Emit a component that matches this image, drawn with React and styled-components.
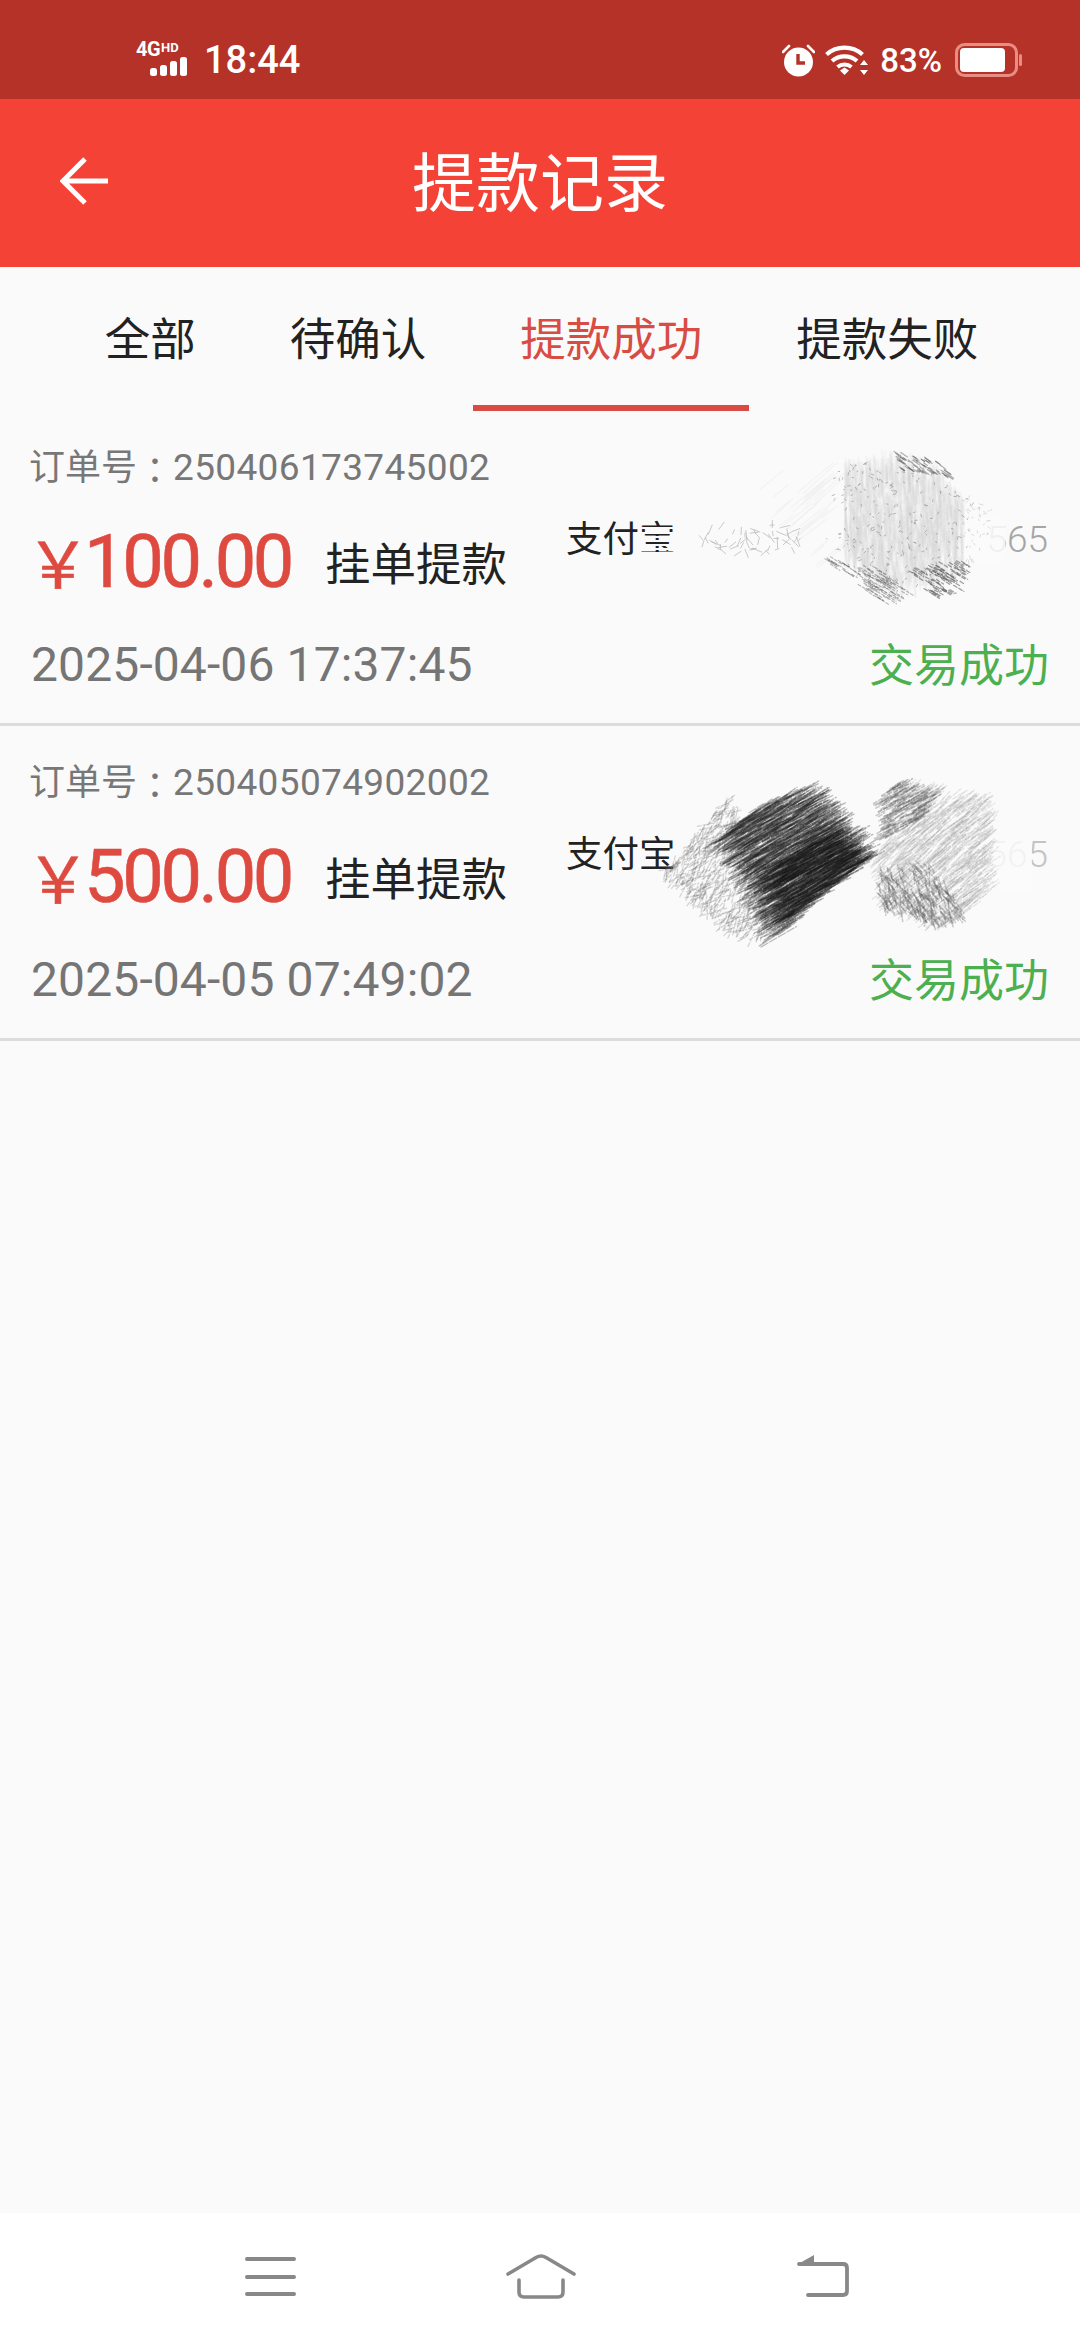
import React from "react";
import styled, { createGlobalStyle } from "styled-components";

const Global = createGlobalStyle`
  html, body { margin: 0; padding: 0; background: #fafafa; }
  * { box-sizing: border-box; }
`;

const FONT = `Roboto, "Noto Sans CJK SC", sans-serif`;

const Page = styled.div`
  width: 1080px;
  height: 2340px;
  display: flex;
  flex-direction: column;
  background: #fafafa;
  font-family: ${FONT};
  overflow: hidden;
`;

const StatusBar = styled.div`
  height: 99px;
  flex: none;
  background: #b53228;
  color: #fff;
  display: flex;
  align-items: center;
  padding: 21px 58px 0 136px;
`;

const Network = styled.div`
  width: 53px;
  height: 34px;
  display: flex;
  flex-direction: column;
  margin-top: -2px;
`;

const NetworkLabel = styled.div`
  height: 15px;
  display: flex;
  align-items: flex-start;
  font-weight: 700;
  font-size: 20px;
  line-height: 15px;
  letter-spacing: -0.5px;
`;

const NetworkHd = styled.span`
  font-size: 13px;
  line-height: 11px;
  margin-left: 1px;
  letter-spacing: 0;
`;

const Clock = styled.div`
  margin-left: 15px;
  font-size: 38px;
  font-weight: 500;
  line-height: 40px;
`;

const StatusRight = styled.div`
  margin-left: auto;
  display: flex;
  align-items: center;
`;

const Percent = styled.div`
  margin: 2px 13px 0 12px;
  font-size: 33px;
  font-weight: 500;
  line-height: 40px;
`;

const WifiIcon = styled.svg`
  margin-left: 10px;
`;

const Header = styled.header`
  height: 168px;
  flex: none;
  background: #f44336;
  display: grid;
  grid-template-columns: 1fr auto 1fr;
  align-items: center;
`;

const BackButton = styled.div`
  padding: 0 0 4px 60px;
  display: flex;
`;

const Title = styled.h1`
  margin: 4px 0 0;
  color: #fff;
  font-size: 64px;
  font-weight: 400;
  line-height: 80px;
`;

const Tabs = styled.nav`
  height: 144px;
  flex: none;
  display: flex;
  justify-content: center;
  padding-left: 3px;
`;

const Tab = styled.div`
  height: 144px;
  padding: 0 47px;
  display: flex;
  align-items: center;
  font-size: 45.5px;
  color: ${(p) => (p.$active ? "#d84c44" : "#222")};
  border-bottom: 6px solid ${(p) => (p.$active ? "#d84c44" : "transparent")};
`;

const Record = styled.article`
  position: relative;
  height: 315px;
  flex: none;
  padding: 30px 32px 22px 30px;
  border-bottom: 3px solid #dcdcdc;
  display: grid;
  grid-template-columns: 295px 241px 1fr;
  grid-template-rows: 54px 132px 74px;
`;

const OrderNo = styled.div`
  grid-column: 1 / -1;
  display: flex;
  align-items: center;
  margin-left: -1px;
  color: #777;
  font-size: 36px;
  line-height: 54px;
`;

const OrderColon = styled.span`
  font-family: "Noto Sans CJK TC", sans-serif;
`;

const OrderDigits = styled.span`
  font-size: 37px;
  letter-spacing: 0.35px;
`;

const Amount = styled.div`
  display: flex;
  align-items: center;
  padding-left: 6px;
  color: #de4a40;
  font-size: 74px;
  letter-spacing: -3.4px;
  -webkit-text-stroke: 0.6px #de4a40;
`;

const Yen = styled.span`
  font-family: "Noto Sans CJK SC", sans-serif;
  font-size: 64px;
  letter-spacing: 0;
  margin: -2px -6px 0 -10px;
`;

const Kind = styled.div`
  display: flex;
  align-items: center;
  color: #222;
  font-size: 45.5px;
`;

const Account = styled.div`
  display: flex;
  align-items: flex-start;
  justify-content: space-between;
  padding-top: 20px;
  color: #222;
  font-size: 36.5px;
  line-height: 50px;
`;

const AccountTail = styled.span`
  color: ${(p) => p.$tone};
  font-weight: 300;
  font-size: 37px;
`;

const DateText = styled.div`
  grid-column: 1 / 3;
  display: flex;
  align-items: center;
  padding-left: 1px;
  color: #757575;
  font-size: 48px;
  letter-spacing: 0.12px;
`;

const StatusText = styled.div`
  display: flex;
  align-items: center;
  justify-content: flex-end;
  color: #4caf50;
  font-size: 45px;
  padding-bottom: 3px;
  margin-right: -1px;
`;

const Scribble = styled.svg`
  position: absolute;
  left: 640px;
  top: ${(p) => p.$top}px;
  pointer-events: none;
`;

const List = styled.main`
  flex: 1;
  display: flex;
  flex-direction: column;
`;

const BottomNav = styled.footer`
  height: 127px;
  flex: none;
  background: #fff;
  display: flex;
  align-items: flex-start;
  padding: 41px 0 0 245px;
`;

const NavIcon = styled.svg`
  margin-left: ${(p) => p.$gap || 0}px;
  margin-top: ${(p) => p.$drop || 0}px;
`;

// Seeded generator so the pencil shading is the same on every render.
function rng(seed) {
  let a = seed;
  return () => {
    a = (a + 0x6d2b79f5) | 0;
    let t = Math.imul(a ^ (a >>> 15), 1 | a);
    t = (t + Math.imul(t ^ (t >>> 7), 61 | t)) ^ t;
    return ((t ^ (t >>> 14)) >>> 0) / 4294967296;
  };
}

function inside(poly, x, y) {
  let hit = false;
  for (let i = 0, j = poly.length - 1; i < poly.length; j = i++) {
    const [xi, yi] = poly[i];
    const [xj, yj] = poly[j];
    if (yi > y !== yj > y && x < ((xj - xi) * (y - yi)) / (yj - yi) + xi) hit = !hit;
  }
  return hit;
}

// Scatters short pencil strokes inside a polygon and groups them into batches,
// so that strokes from different batches build up where they cross.
function hatch(poly, { count, angle, jitter = 6, length, seed, batches = 24 }) {
  const r = rng(seed);
  const xs = poly.map((p) => p[0]);
  const ys = poly.map((p) => p[1]);
  const [x0, x1, y0, y1] = [Math.min(...xs), Math.max(...xs), Math.min(...ys), Math.max(...ys)];
  const out = Array.from({ length: batches }, () => "");
  let made = 0;
  let guard = 0;
  while (made < count && guard < count * 30) {
    guard += 1;
    const x = x0 + r() * (x1 - x0);
    const y = y0 + r() * (y1 - y0);
    if (!inside(poly, x, y)) continue;
    const a = ((angle + (r() - 0.5) * jitter) * Math.PI) / 180;
    const l = length * (0.4 + r() * 0.8);
    const bx = x - (Math.cos(a) * l) / 2;
    const by = y - (Math.sin(a) * l) / 2;
    out[made % batches] += `M${bx.toFixed(1)} ${by.toFixed(1)}L${(bx + Math.cos(a) * l).toFixed(1)} ${(by + Math.sin(a) * l).toFixed(1)}`;
    made += 1;
  }
  return out;
}

const Layer = ({ poly, color, opacity, width, dash, ...rest }) => (
  <g fill="none" stroke={color} strokeOpacity={opacity} strokeWidth={width} strokeDasharray={dash} strokeLinecap="round">
    {hatch(poly, rest).map((d, i) => (
      <path key={i} d={d} />
    ))}
  </g>
);

const PaleShading = () => (
  <Scribble $top={29} width="420" height="180" viewBox="0 0 420 180">
    {/* broken strokes across the payment label */}
    {[88, 93, 97, 101, 105, 109, 113].map((y) => (
      <line key={y} x1="0" x2="36" y1={y} y2={y} stroke="#fafafa" strokeWidth="2" />
    ))}
    <Layer poly={[[60, 84], [160, 84], [160, 114], [60, 114]]} count={60} angle={0} jitter={180} length={9} seed={3} color="#b4b4b4" opacity={0.7} width={1} />
    <rect x="318" y="78" width="47" height="44" fill="#fafafa" opacity="0.88" />
    <Layer poly={[[205, 30], [255, 20], [300, 35], [325, 70], [322, 130], [250, 150], [205, 115]]} count={1500} angle={88} jitter={10} length={24} seed={7} color="#d0d0d0" opacity={0.12} width={2.2} />
    <Layer poly={[[195, 28], [270, 15], [335, 65], [325, 135], [250, 160], [185, 110]]} count={240} angle={0} jitter={180} length={2.4} seed={11} color="#7c7c7c" opacity={0.5} width={1} />
    <Layer poly={[[320, 50], [352, 68], [350, 110], [322, 130]]} count={50} angle={0} jitter={180} length={2.4} seed={29} color="#bbb" opacity={0.5} width={1} />
    <Layer poly={[[255, 12], [300, 22], [312, 38], [262, 30]]} count={70} angle={35} length={7} seed={13} color="#555" opacity={0.45} width={1.2} batches={6} />
    <Layer poly={[[178, 116], [240, 130], [270, 152], [248, 166]]} count={90} angle={32} length={13} seed={17} color="#555" opacity={0.42} width={1.1} dash="3 2" batches={6} />
    <Layer poly={[[270, 128], [328, 122], [322, 150], [290, 158]]} count={80} angle={32} length={11} seed={19} color="#444" opacity={0.5} width={1.2} dash="4 2" batches={6} />
    <Layer poly={[[130, 40], [200, 30], [200, 120], [150, 100]]} count={30} angle={-40} length={40} seed={23} color="#ececec" opacity={0.4} width={1.5} />
  </Scribble>
);

const DarkShading = () => (
  <Scribble $top={44} width="420" height="180" viewBox="0 0 420 180">
    <rect x="345" y="70" width="47" height="50" fill="#fafafa" opacity="0.85" />
    <Layer poly={[[22, 105], [90, 25], [135, 165], [100, 172], [55, 135]]} count={520} angle={-48} jitter={80} length={15} seed={31} color="#6c6c6c" opacity={0.26} width={1.3} dash="4 2" />
    <Layer poly={[[82, 68], [120, 35], [168, 18], [232, 88], [170, 135], [138, 168], [118, 125]]} count={1500} angle={-30} jitter={12} length={36} seed={37} color="#262626" opacity={0.3} width={1.35} dash="8 2" />
    <Layer poly={[[120, 100], [200, 60], [225, 90], [145, 150]]} count={400} angle={-30} jitter={10} length={26} seed={41} color="#1a1a1a" opacity={0.36} width={1.4} dash="9 2" />
    <Layer poly={[[236, 85], [258, 12], [350, 30], [352, 120], [322, 148], [300, 156], [240, 135]]} count={950} angle={-40} jitter={18} length={20} seed={43} color="#8c8c8c" opacity={0.2} width={1.3} dash="5 2" />
    <Layer poly={[[240, 30], [258, 12], [300, 22], [280, 50], [242, 70]]} count={170} angle={-28} jitter={14} length={16} seed={47} color="#555" opacity={0.3} width={1.5} dash="4 2" />
    <Layer poly={[[235, 105], [290, 95], [325, 145], [300, 156], [245, 140]]} count={220} angle={62} jitter={50} length={14} seed={53} color="#555" opacity={0.3} width={1.5} dash="4 2" />
  </Scribble>
);

const records = [
  { no: "250406173745002", value: "100.00", time: "2025-04-06 17:37:45", tone: "#a6a6a6", Shade: PaleShading },
  { no: "250405074902002", value: "500.00", time: "2025-04-05 07:49:02", tone: "#c4c4c4", Shade: DarkShading },
];

const tabs = ["全部", "待确认", "提款成功", "提款失败"];

export default function App() {
  return (
    <Page>
      <Global />
      <StatusBar>
        <Network>
          <NetworkLabel>4G<NetworkHd>HD</NetworkHd></NetworkLabel>
          <svg width="53" height="19" viewBox="0 0 53 19">
            {[[14, 11, 8], [24, 8, 11], [34, 4, 15], [44, 0, 19]].map(([x, y, h]) => (
              <rect key={x} x={x} y={y} width="7" height={h} rx="2.5" fill="#fff" />
            ))}
          </svg>
        </Network>
        <Clock>18:44</Clock>
        <StatusRight>
          <svg width="33" height="33" viewBox="0 0 33 33">
            <circle cx="16.5" cy="18" r="14.5" fill="#fff" />
            <path d="M16 10v9h7" fill="none" stroke="#b53228" strokeWidth="3.4" />
            <path d="M1 8l6-6M32 8l-6-6" stroke="#fff" strokeWidth="2.6" strokeLinecap="round" />
          </svg>
          <WifiIcon width="43" height="31" viewBox="0 0 43 31">
            <path d="M1.5 9.5a27 27 0 0 1 36 0" fill="none" stroke="#fff" strokeWidth="4.2" />
            <path d="M7 16a19 19 0 0 1 25 0" fill="none" stroke="#fff" strokeWidth="4.2" />
            <path d="M12.5 22a11 11 0 0 1 14 0" fill="none" stroke="#fff" strokeWidth="4" />
            <path d="M15 25.5l4.5-3 4.5 3-4.5 4.5z" fill="#fff" />
            <path d="M39 15l4 5h-8zM39 30l-4-5h8z" fill="#fff" />
          </WifiIcon>
          <Percent>83%</Percent>
          <svg width="67" height="34" viewBox="0 0 67 34">
            <rect x="1.5" y="1.5" width="60" height="31" rx="8" fill="none" stroke="#e88d84" strokeWidth="3" />
            <rect x="5" y="5" width="45" height="24" rx="4" fill="#fff" />
            <rect x="64" y="11" width="3" height="12" rx="1.5" fill="#e88d84" />
          </svg>
        </StatusRight>
      </StatusBar>

      <Header>
        <BackButton>
          <svg width="48" height="48" viewBox="0 0 48 48">
            <path d="M25 2L3 24l22 22M3 24h45" fill="none" stroke="#fff" strokeWidth="5" />
          </svg>
        </BackButton>
        <Title>提款记录</Title>
      </Header>

      <Tabs>
        {tabs.map((t) => (
          <Tab key={t} $active={t === "提款成功"}>{t}</Tab>
        ))}
      </Tabs>

      <List>
        {records.map(({ no, value, time, tone, Shade }) => (
          <Record key={no}>
            <OrderNo>订单号<OrderColon>：</OrderColon><OrderDigits>{no}</OrderDigits></OrderNo>
            <Amount><Yen>￥</Yen>{value}</Amount>
            <Kind>挂单提款</Kind>
            <Account>
              <span>支付宝</span>
              <AccountTail $tone={tone}>565</AccountTail>
            </Account>
            <DateText>{time}</DateText>
            <StatusText>交易成功</StatusText>
            <Shade />
          </Record>
        ))}
      </List>

      <BottomNav>
        <NavIcon width="51" height="40" viewBox="0 0 51 40" $drop={3}>
          <path d="M2 2h47M2 20h47M2 37h47" stroke="#888" strokeWidth="4" strokeLinecap="round" />
        </NavIcon>
        <NavIcon width="70" height="46" viewBox="0 0 70 46" $gap={210}>
          <path d="M2 20L30 3.5q5-3 10 0L68 20" fill="none" stroke="#888" strokeWidth="3.6" strokeLinecap="round" />
          <path d="M13 26v12q0 5 5 5h34q5 0 5-5V26" fill="none" stroke="#888" strokeWidth="3.6" strokeLinecap="round" />
        </NavIcon>
        <NavIcon width="52" height="44" viewBox="0 0 52 44" $gap={221}>
          <path d="M2 9.5L17 1v8.5z" fill="#888" />
          <path d="M2 10h44q4 0 4 4v23q0 4-4 4H11" fill="none" stroke="#888" strokeWidth="3.8" strokeLinecap="round" />
        </NavIcon>
      </BottomNav>
    </Page>
  );
}
